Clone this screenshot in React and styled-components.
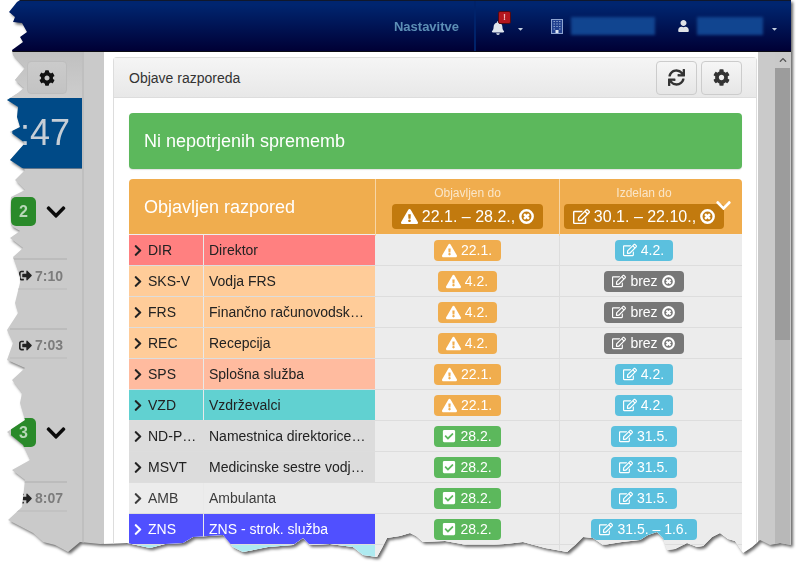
import styled, { createGlobalStyle } from 'styled-components';
import {
    FaBell,
    FaCaretDown,
    FaCheckSquare,
    FaChevronDown,
    FaChevronRight,
    FaCog,
    FaExclamationTriangle,
    FaRegEdit,
    FaSignOutAlt,
    FaSync,
    FaUser,
} from 'react-icons/fa';

const GlobalStyle = createGlobalStyle`
    html, body {
        margin: 0;
        background: #fff;
        overflow: hidden;
    }
    * {
        box-sizing: border-box;
    }
`;

// the torn paper edge of the screenshot
const tornEdge = [
    [17, 2], [20, 0], [791, 0], [791, 545], [780, 543], [770, 545], [760, 540], [752, 547], [743, 553],
    [735, 541], [728, 539], [720, 533], [712, 537], [703, 546], [697, 547], [687, 543], [675, 549], [667, 550],
    [663, 538], [657, 532], [648, 535], [640, 540], [622, 542], [603, 545], [593, 538], [583, 537], [575, 545],
    [567, 552], [545, 548], [523, 542], [505, 544], [487, 545], [467, 545], [445, 541], [423, 542], [416, 536],
    [410, 533], [400, 536], [387, 538], [382, 548], [377, 557], [363, 555], [353, 547], [330, 544], [310, 545],
    [303, 538], [293, 545], [268, 547], [243, 552], [233, 547], [223, 535], [193, 537], [183, 543], [165, 544],
    [150, 548], [127, 543], [100, 544], [80, 542], [68, 552], [55, 545], [43, 542], [33, 533], [8, 520], [22, 507],
    [25, 480], [12, 470], [30, 460], [23, 445], [7, 432], [25, 420], [20, 403], [22, 393], [12, 380], [25, 368],
    [7, 360], [13, 343], [7, 330], [18, 313], [15, 303], [20, 283], [20, 277], [13, 257], [23, 248], [10, 238],
    [20, 231], [11, 226], [10, 210], [11, 197], [25, 190], [15, 180], [25, 170], [10, 160], [25, 143], [10, 132],
    [20, 127], [17, 117], [18, 107], [7, 100], [18, 93], [24, 88], [15, 80], [25, 68], [13, 55], [12, 50], [23, 42],
    [20, 37], [27, 32], [22, 23], [13, 22], [15, 17], [9, 12],
]
    .map(([x, y]) => `${x}px ${y}px`)
    .join(', ');

const Shadow = styled.div`
    width: 798px;
    height: 568px;
    filter: drop-shadow(2px 2px 1.5px rgba(0, 0, 0, 0.6));
`;

const Paper = styled.div`
    width: 791px;
    height: 568px;
    display: flex;
    flex-direction: column;
    clip-path: polygon(${tornEdge});
    font-family: 'Liberation Sans', Arial, sans-serif;
    font-size: 14px;
    color: #333;
`;

const TopBar = styled.header`
    height: 52px;
    flex: none;
    display: flex;
    justify-content: flex-end;
    align-items: stretch;
    padding-right: 13px;
    background: linear-gradient(#00256f, #00256f 8%, #000035);
    border-top: 1px solid #10182c;
    border-bottom: 1px solid #0c0c14;
`;

const NavGroup = styled.div`
    display: flex;
    align-items: center;
    gap: 8px;
    margin-left: ${(props) => props.$left || 0}px;
    filter: blur(0.5px);
`;

const NavText = styled.span`
    padding-right: 15px;
    font-size: 13px;
    font-weight: bold;
    color: #5c8fb6;
    filter: blur(0.4px);
`;

const NavDivider = styled.div`
    width: 2px;
    background: #00226a;
    margin-right: 15px;
`;

const BellWrap = styled.div`
    position: relative;
    display: flex;
    width: 14px;
    margin-top: 3px;
    margin-right: 4px;
    color: #dfe6ee;
    font-size: 14px;
`;

const BellBadge = styled.span`
    position: absolute;
    top: -10px;
    left: 7px;
    width: 13px;
    height: 13px;
    border: 1px solid #500a14;
    border-radius: 2px;
    background: #b3161e;
    color: #f3b5b5;
    font-size: 9px;
    font-weight: bold;
    line-height: 11px;
    text-align: center;
`;

const Caret = styled(FaCaretDown)`
    width: 7px;
    height: 8px;
    margin-top: 5px;
    color: #c4d0e0;
`;

const UserIcon = styled(FaUser)`
    width: 11px;
    height: 12px;
    color: #dfe2e6;
`;

const Redacted = styled.div`
    width: ${(props) => props.$width}px;
    height: 18px;
    background: #114590;
    filter: blur(1.5px);
`;

const Main = styled.div`
    flex: 1;
    min-height: 0;
    display: flex;
    background: #cacaca;
    overflow: hidden;
`;

const Sidebar = styled.aside`
    width: 84px;
    flex: none;
    border-right: 2px solid #bfbfbf;
    filter: blur(0.4px);
`;

const GearBar = styled.div`
    height: 46px;
    display: flex;
    justify-content: flex-end;
    align-items: flex-start;
    padding: 9px 15px 0 0;
    background: linear-gradient(#c0c0c0, #cdcdcd);
`;

const GearButton = styled.div`
    width: 40px;
    height: 33px;
    display: flex;
    align-items: center;
    justify-content: center;
    border: 1px solid #bdbdbd;
    border-radius: 4px;
    background: linear-gradient(#cbcbcb, #c3c3c3);
    color: #111;
    font-size: 16px;
`;

const ClockTile = styled.div`
    height: 71px;
    padding-right: 12px;
    background: #004a87;
    border-bottom: 1px solid #60758a;
    color: #c6ced6;
    font-size: 36px;
    line-height: 70px;
    text-align: right;
`;

const DayHead = styled.div`
    height: 29px;
    display: flex;
    align-items: center;
    gap: 9px;
    margin-top: ${(props) => props.$top}px;
    padding-left: 11px;
    color: #0b0b0b;
    font-size: 22px;
`;

const DayBadge = styled.span`
    width: 25px;
    height: 29px;
    border-radius: 5px;
    background: #2a8a2a;
    color: #b8d8b8;
    font-size: 16px;
    font-weight: bold;
    line-height: 29px;
    text-align: center;
`;

const TimeRow = styled.div`
    height: ${(props) => props.$height || 31}px;
    display: flex;
    align-items: center;
    justify-content: flex-end;
    gap: 3px;
    margin: ${(props) => props.$top}px 15px 0 10px;
    padding: 3px 4px 0 0;
    border-top: 2px solid #bcbcbc;
    border-bottom: 2px solid #c2c2c2;
    color: #7c7c7c;
    font-size: 14px;
    font-weight: bold;

    svg {
        color: #222;
        font-size: 13px;
    }
`;

const Gutter = styled.div`
    width: 20px;
    flex: none;
`;

const Modal = styled.section`
    width: 654px;
    flex: none;
    padding: 5px 1px 0 9px;
    background: #fff;
`;

const Panel = styled.div`
    border: 1px solid #ddd;
    border-bottom: 0;
    border-radius: 4px 4px 0 0;
`;

const PanelHeader = styled.div`
    height: 40px;
    display: flex;
    justify-content: space-between;
    align-items: center;
    padding: 0 14px 0 15px;
    background: linear-gradient(#f5f5f5, #e8e8e8);
    border-bottom: 1px solid #ddd;
`;

const ToolRow = styled.div`
    display: flex;
    gap: 4px;
`;

const ToolButton = styled.button`
    width: 41px;
    height: 34px;
    display: flex;
    align-items: center;
    justify-content: center;
    padding: 0;
    border: 1px solid #ccc;
    border-radius: 4px;
    background: linear-gradient(#f6f6f6, #e6e6e6);
    color: #333;
    font-size: 17px;
`;

const PanelBody = styled.div`
    padding: 15px 14px 0 15px;
`;

const Alert = styled.div`
    height: 56px;
    margin-bottom: 10px;
    padding-left: 15px;
    border-radius: 4px;
    background: #5cb85c;
    box-shadow: 0 1px 1px rgba(0, 0, 0, 0.12);
    color: #fff;
    font-size: 18px;
    line-height: 56px;
`;

const Head = styled.div`
    display: grid;
    grid-template-columns: 246px 184px 185px;
    height: 56px;
    border-radius: 4px 4px 0 0;
    background: #f0ad4e;
    border-bottom: 1px solid #eee;
`;

const HeadTitle = styled.div`
    padding-left: 15px;
    color: #fff;
    font-size: 18px;
    line-height: 57px;
`;

const HeadCell = styled.div`
    position: relative;
    display: flex;
    flex-direction: column;
    align-items: center;
    padding: 7px ${(props) => (props.$last ? 16 : 0)}px 0 0;
    border-left: 1px solid #f7d6a6;
    color: #fae6c8;
    font-size: 12px;
    line-height: 14px;
`;

const Range = styled.span`
    display: flex;
    align-items: center;
    gap: 4px;
    height: 25px;
    margin-top: 4px;
    padding: 0 9px;
    border-radius: 4px;
    background: #c27a0e;
    color: #fff;
    font-size: 16px;
    white-space: nowrap;
`;

const ExpandIcon = styled(FaChevronDown)`
    position: absolute;
    top: 18px;
    right: 12px;
    width: 17px;
    height: 17px;
    color: #fff;
`;

const Row = styled.div`
    display: grid;
    grid-template-columns: 75px 171px 184px 185px;
    height: 31px;
    background: #ececec;
    border-bottom: 1px solid #ddd;
`;

const CodeCell = styled.div`
    display: flex;
    align-items: center;
    gap: 6px;
    min-width: 0;
    padding: 0 5px;
    background: ${(props) => props.$bg};
    border-right: 1px solid ${(props) => (props.$plain ? props.$bg : '#e9e9e9')};
    color: ${(props) => props.$color};

    svg {
        flex: none;
        width: 8px;
        height: 13px;
    }

    span {
        overflow: hidden;
        white-space: nowrap;
        text-overflow: ellipsis;
    }
`;

const NameCell = styled.div`
    min-width: 0;
    padding: 0 8px 0 5px;
    background: ${(props) => props.$bg};
    color: ${(props) => props.$color};
    line-height: 30px;
    overflow: hidden;
    white-space: nowrap;
    text-overflow: ellipsis;
`;

const StatusCell = styled.div`
    display: flex;
    align-items: center;
    justify-content: center;
    padding: ${(props) => (props.$last ? '0 16px 0 0' : '0 0 0 1px')};
    border-left: ${(props) => (props.$last ? '1px solid #ddd' : '0')};
`;

const labelColors = {
    warning: '#f0ad4e',
    success: '#5cb85c',
    info: '#5bc0de',
    neutral: '#777777',
};

const Label = styled.span`
    display: inline-flex;
    align-items: center;
    gap: 4px;
    height: 21px;
    padding: 0 9px 0 8px;
    border-radius: 4px;
    background: ${(props) => labelColors[props.$kind]};
    color: #fff;
    font-size: 14px;
    white-space: nowrap;

    svg {
        flex: none;
    }
`;

const ScrollGutter = styled.div`
    width: 17px;
    flex: none;
`;

const Scrollbar = styled.div`
    width: 15px;
    flex: none;
    display: flex;
    flex-direction: column;
    background: #b8b8b8;
`;

const ScrollArrow = styled.div`
    height: 16px;
    display: flex;
    align-items: center;
    justify-content: center;
    background: #c9c9c9;
    color: #555;

    svg {
        width: 8px;
        height: 8px;
        transform: rotate(180deg);
    }
`;

const ScrollThumb = styled.div`
    height: 272px;
    background: #9c9c9c;
`;

const XCircle = ({ size }) => (
    <svg width={size} height={size} viewBox="0 0 16 16" fill="none" stroke="#fff">
        <circle cx="8" cy="8" r="6.6" strokeWidth="2.6" />
        <path d="M5.4 5.4l5.2 5.2M10.6 5.4l-5.2 5.2" strokeWidth="2.6" />
    </svg>
);

const BuildingIcon = () => (
    <svg width="12" height="15" viewBox="0 0 12 15">
        <rect x="0.5" y="0.5" width="11" height="14" fill="#23418f" stroke="#8ea4d0" />
        <path
            d="M2.5 2.5h1.5M5.3 2.5h1.5M8 2.5h1.5M2.5 5h1.5M5.3 5h1.5M8 5h1.5M2.5 7.5h1.5M5.3 7.5h1.5M8 7.5h1.5M2.5 10h1.5M8 10h1.5"
            stroke="#8ea4d0"
        />
        <rect x="4.5" y="11" width="3" height="3" fill="#dfe6f2" />
    </svg>
);

const published = {
    warning: <FaExclamationTriangle size={15} />,
    success: <FaCheckSquare size={14} />,
};

const rows = [
    { code: 'DIR', name: 'Direktor', bg: '#ff8080', pub: 'warning', pubText: '22.1.', made: 'info', madeText: '4.2.' },
    { code: 'SKS-V', name: 'Vodja FRS', bg: '#ffcc99', pub: 'warning', pubText: '4.2.', made: 'neutral', madeText: 'brez' },
    { code: 'FRS', name: 'Finančno računovodska služba', bg: '#ffcc99', pub: 'warning', pubText: '4.2.', made: 'neutral', madeText: 'brez' },
    { code: 'REC', name: 'Recepcija', bg: '#ffcc99', pub: 'warning', pubText: '4.2.', made: 'neutral', madeText: 'brez' },
    { code: 'SPS', name: 'Splošna služba', bg: '#ffbb9f', pub: 'warning', pubText: '22.1.', made: 'info', madeText: '4.2.' },
    { code: 'VZD', name: 'Vzdrževalci', bg: '#61d1d1', pub: 'warning', pubText: '22.1.', made: 'info', madeText: '4.2.' },
    { code: 'ND-PZNG', name: 'Namestnica direktorice za zdravstveno nego', bg: '#dcdcdc', plain: true, pub: 'success', pubText: '28.2.', made: 'info', madeText: '31.5.' },
    { code: 'MSVT', name: 'Medicinske sestre vodje timov', bg: '#dcdcdc', plain: true, pub: 'success', pubText: '28.2.', made: 'info', madeText: '31.5.' },
    { code: 'AMB', name: 'Ambulanta', bg: '#ececec', color: '#3c3c3c', pub: 'success', pubText: '28.2.', made: 'info', madeText: '31.5.' },
    { code: 'ZNS', name: 'ZNS - strok. služba', bg: '#5050ff', color: '#fff', pub: 'success', pubText: '28.2.', made: 'info', madeText: '31.5. – 1.6.' },
];

function App() {
    return (
        <>
            <GlobalStyle />
            <Shadow>
                <Paper>
                    <TopBar>
                        <NavGroup>
                            <NavText>Nastavitve</NavText>
                        </NavGroup>
                        <NavDivider />
                        <NavGroup>
                            <BellWrap>
                                <FaBell />
                                <BellBadge>!</BellBadge>
                            </BellWrap>
                            <Caret />
                        </NavGroup>
                        <NavGroup $left={27}>
                            <BuildingIcon />
                            <Redacted $width={84} />
                        </NavGroup>
                        <NavGroup $left={23}>
                            <UserIcon />
                            <Redacted $width={66} />
                            <Caret />
                        </NavGroup>
                    </TopBar>
                    <Main>
                        <Sidebar>
                            <GearBar>
                                <GearButton>
                                    <FaCog />
                                </GearButton>
                            </GearBar>
                            <ClockTile>1:47</ClockTile>
                            <DayHead $top={28}>
                                <DayBadge>2</DayBadge>
                                <FaChevronDown />
                            </DayHead>
                            <TimeRow $top={32} $height={32}>
                                <FaSignOutAlt />
                                7:10
                            </TimeRow>
                            <TimeRow $top={38}>
                                <FaSignOutAlt />
                                7:03
                            </TimeRow>
                            <DayHead $top={59}>
                                <DayBadge>3</DayBadge>
                                <FaChevronDown />
                            </DayHead>
                            <TimeRow $top={34}>
                                <FaSignOutAlt />
                                8:07
                            </TimeRow>
                        </Sidebar>
                        <Gutter />
                        <Modal>
                            <Panel>
                                <PanelHeader>
                                    Objave razporeda
                                    <ToolRow>
                                        <ToolButton>
                                            <FaSync />
                                        </ToolButton>
                                        <ToolButton>
                                            <FaCog />
                                        </ToolButton>
                                    </ToolRow>
                                </PanelHeader>
                                <PanelBody>
                                    <Alert>Ni nepotrjenih sprememb</Alert>
                                    <Head>
                                        <HeadTitle>Objavljen razpored</HeadTitle>
                                        <HeadCell>
                                            Objavljen do
                                            <Range>
                                                <FaExclamationTriangle size={17} />
                                                22.1. – 28.2.,
                                                <XCircle size={15} />
                                            </Range>
                                        </HeadCell>
                                        <HeadCell $last>
                                            Izdelan do
                                            <Range>
                                                <FaRegEdit size={17} />
                                                30.1. – 22.10.,
                                                <XCircle size={15} />
                                            </Range>
                                            <ExpandIcon />
                                        </HeadCell>
                                    </Head>
                                    {rows.map((row) => (
                                        <Row key={row.code}>
                                            <CodeCell $bg={row.bg} $plain={row.plain} $color={row.color || '#222'}>
                                                <FaChevronRight />
                                                <span>{row.code}</span>
                                            </CodeCell>
                                            <NameCell $bg={row.bg} $color={row.color || '#222'}>
                                                {row.name}
                                            </NameCell>
                                            <StatusCell>
                                                <Label $kind={row.pub}>
                                                    {published[row.pub]}
                                                    {row.pubText}
                                                </Label>
                                            </StatusCell>
                                            <StatusCell $last>
                                                <Label $kind={row.made}>
                                                    <FaRegEdit size={14} />
                                                    {row.madeText}
                                                    {row.made === 'neutral' && <XCircle size={13} />}
                                                </Label>
                                            </StatusCell>
                                        </Row>
                                    ))}
                                    <Row>
                                        <CodeCell $bg="#aeeaf0" $plain />
                                        <NameCell $bg="#aeeaf0" />
                                        <StatusCell />
                                        <StatusCell $last />
                                    </Row>
                                </PanelBody>
                            </Panel>
                        </Modal>
                        <ScrollGutter />
                        <Scrollbar>
                            <ScrollArrow>
                                <FaChevronDown />
                            </ScrollArrow>
                            <ScrollThumb />
                        </Scrollbar>
                    </Main>
                </Paper>
            </Shadow>
        </>
    );
}

export default App;
